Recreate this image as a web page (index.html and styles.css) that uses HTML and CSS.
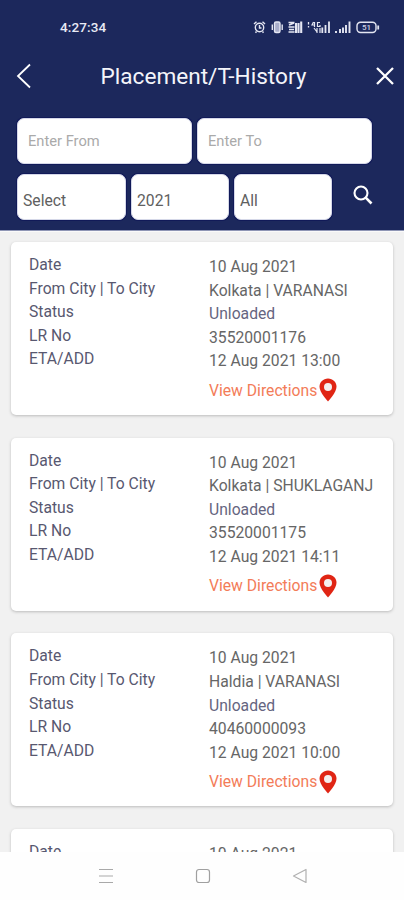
FILE: index.html
```html
<!DOCTYPE html>
<html lang="en">
<head>
<meta charset="utf-8">
<meta name="viewport" content="width=device-width, initial-scale=1">
<title>Placement/T-History</title>
<link rel="stylesheet" href="styles.css">
</head>
<body>
<div class="app">
  <header class="header">
    <div class="status">
      <span class="clock">4:27:34</span>
      <svg class="status-icons" width="128" height="16" viewBox="0 0 128 16" fill="none" stroke="#e4e6f2" stroke-width="1.4">
        <circle cx="6.500" cy="8.500" r="4.200"/><path d="M1 5l2.500-2.300M12 5L9.500 2.700M6.500 6v3h2M3.500 12.500l-1 1.300M9.500 12.500l1 1.300"/>
        <rect x="21.500" y="3" width="5.500" height="10.500" rx="1.500" fill="#a9aecb"/><path d="M19.300 5.500v5.500M29.200 5.500v5.500"/>
        <path d="M35.500 3.500h6M36 6l5-2M35.500 8h6M36 10.500h5M35.500 13h6" stroke-width="1.700"/><path d="M43 4v10M45.500 4v10M48.200 2.500v11.500" stroke-width="2.100"/>
        <path d="M55.500 3v2.500M55.500 7v1.500" stroke-width="1.300"/><path d="M60.500 3l-1.500 3h3M61.500 3v5M67 3.500h-2.500v4H67V6M61 9l3 4M64 9v5M67 9v5" stroke-width="1.200"/><path d="M69.300 8.500v5.500M72.500 6v8M76 2.500v11.500" stroke-width="1.800"/>
        <path d="M83 12v2M87 10v4M90 8.500v5.500M93 6v8M96.500 2.500v11.500" stroke-width="1.900"/>
        <rect x="104" y="3.200" width="19" height="10.300" rx="3.500"/><path d="M125.200 6.500v4" stroke-width="1.800"/>
        <text x="113.500" y="11.400" text-anchor="middle" class="battery">51</text>
      </svg>
    </div>
    <div class="titlebar">
      <svg width="16" height="26" viewBox="0 0 16 26" fill="none" stroke="#fff" stroke-width="1.800"><path d="M14 1.500L2 13l12 11.500"/></svg>
      <h1 class="title">Placement/T-History</h1>
      <svg width="20" height="20" viewBox="0 0 20 20" fill="none" stroke="#fff" stroke-width="2.300"><path d="M2 2l16 16M18 2L2 18"/></svg>
    </div>
    <div class="filters">
      <div class="field wide">Enter From</div>
      <div class="field wide">Enter To</div>
    </div>
    <div class="filters">
      <div class="field select first"><span>Select</span></div>
      <div class="field select"><span>2021</span></div>
      <div class="field select"><span>All</span></div>
      <svg class="search" width="20" height="20" viewBox="0 0 20 20" fill="none" stroke="#fff" stroke-width="2.100"><circle cx="8" cy="8" r="6.500"/><path d="M12.700 12.700L18.500 18.500" stroke-width="2.600"/></svg>
    </div>
  </header>
  <main class="list">
    <article class="card">
      <div class="labels"><p>Date</p><p>From City | To City</p><p>Status</p><p>LR No</p><p>ETA/ADD</p></div>
      <div class="values"><p>10 Aug 2021</p><p>Kolkata | VARANASI</p><p class="state">Unloaded</p><p>35520001176</p><p>12 Aug 2021 13:00</p>
        <a class="directions">View Directions<svg width="18" height="24" viewBox="0 0 18 24"><path d="M9 .5C4.200.5.500 4.100.500 8.800.500 14.500 9 23.500 9 23.500S17.500 14.500 17.500 8.800C17.500 4.100 13.800.5 9 .5Z" fill="#e02514"/><circle cx="9" cy="9" r="4" fill="#f4efee"/></svg></a></div>
    </article>
    <article class="card">
      <div class="labels"><p>Date</p><p>From City | To City</p><p>Status</p><p>LR No</p><p>ETA/ADD</p></div>
      <div class="values"><p>10 Aug 2021</p><p>Kolkata | SHUKLAGANJ</p><p class="state">Unloaded</p><p>35520001175</p><p>12 Aug 2021 14:11</p>
        <a class="directions">View Directions<svg width="18" height="24" viewBox="0 0 18 24"><path d="M9 .5C4.200.5.500 4.100.500 8.800.500 14.500 9 23.500 9 23.500S17.500 14.500 17.500 8.800C17.500 4.100 13.800.5 9 .5Z" fill="#e02514"/><circle cx="9" cy="9" r="4" fill="#f4efee"/></svg></a></div>
    </article>
    <article class="card">
      <div class="labels"><p>Date</p><p>From City | To City</p><p>Status</p><p>LR No</p><p>ETA/ADD</p></div>
      <div class="values"><p>10 Aug 2021</p><p>Haldia | VARANASI</p><p class="state">Unloaded</p><p>40460000093</p><p>12 Aug 2021 10:00</p>
        <a class="directions">View Directions<svg width="18" height="24" viewBox="0 0 18 24"><path d="M9 .5C4.200.5.500 4.100.500 8.800.500 14.500 9 23.500 9 23.500S17.500 14.500 17.500 8.800C17.500 4.100 13.800.5 9 .5Z" fill="#e02514"/><circle cx="9" cy="9" r="4" fill="#f4efee"/></svg></a></div>
    </article>
    <article class="card">
      <div class="labels"><p>Date</p></div>
      <div class="values"><p>10 Aug 2021</p></div>
    </article>
  </main>
  <nav class="nav">
    <svg width="16" height="16" viewBox="0 0 16 16" fill="none" stroke="#a9a9a9" stroke-width="1.200"><path d="M1 1.500h14M1 8h14M1 14.500h14"/></svg>
    <svg width="16" height="16" viewBox="0 0 16 16" fill="none" stroke="#a0a0a0" stroke-width="1.200"><rect x="1.500" y="1.500" width="13" height="13" rx="2.500"/></svg>
    <svg width="16" height="16" viewBox="0 0 16 16" fill="none" stroke="#b0b0b0" stroke-width="1.200" stroke-linejoin="round"><path d="M1.500 8L14 1.500v13Z"/></svg>
  </nav>
</div>
</body>
</html>
```

FILE: styles.css
```css
* { box-sizing: border-box; margin: 0; padding: 0; }
body { font-family: Roboto, sans-serif; background: #fff; }
.app { display: flex; flex-direction: column; width: 404px; height: 900px; overflow: hidden; }
.header { height: 231px; flex: none; background: #1c285c; border-bottom: 1px solid #8f96b5; }
.status { display: flex; justify-content: space-between; align-items: center; height: 36px; padding: 17px 23px 0 60px; color: #e9ebf5; }
.clock { font-size: 13.500px; font-weight: 500; line-height: 18px; letter-spacing: .1px; }
.battery { font: 500 8px Roboto, sans-serif; fill: #cfd2e4; stroke: none; }
.titlebar { display: flex; justify-content: space-between; align-items: center; height: 82px; padding: 0 9px 3px 16px; }
.title { color: #f4f5fa; font-size: 22.600px; font-weight: 400; line-height: 30px; position: relative; top: 1px; }
.filters { display: flex; gap: 5px; height: 46px; padding-left: 17px; margin-bottom: 10px; }
.field { display: flex; align-items: center; background: #fff; border: 1px solid #d5d8e8; border-radius: 7px; box-shadow: 0 0 0 1px #111a58; color: #aaa; font-size: 14.700px; }
.wide { width: 175px; padding-left: 10px; }
.select { width: 98px; padding: 6px 0 0 5px; color: #606060; font-size: 15.700px; }
.select.first { width: 109px; }
.search { margin: 11px 0 0 16px; }
.list { flex: 1; min-height: 0; overflow: hidden; background: #f1f1f1; padding: 10px 11px 0; border-top: 1px solid #fafafa; }
.card { display: flex; height: 173px; margin-bottom: 22.700px; background: #fff; border-radius: 5px; box-shadow: 0 1px 3px #bbb; padding: 11px 0 0 18px; font-size: 15.700px; line-height: 23.600px; color: #666; }
.labels { width: 180px; color: #585870; }
.values { padding-top: 2px; white-space: nowrap; }
.state { color: #656580; }
.directions { display: flex; align-items: center; height: 35px; gap: 2px; color: #f37c58; }
.nav { flex: none; height: 48px; background: #fefefe; display: flex; gap: 81px; align-items: center; padding: 0 0 0 98px; }
```
